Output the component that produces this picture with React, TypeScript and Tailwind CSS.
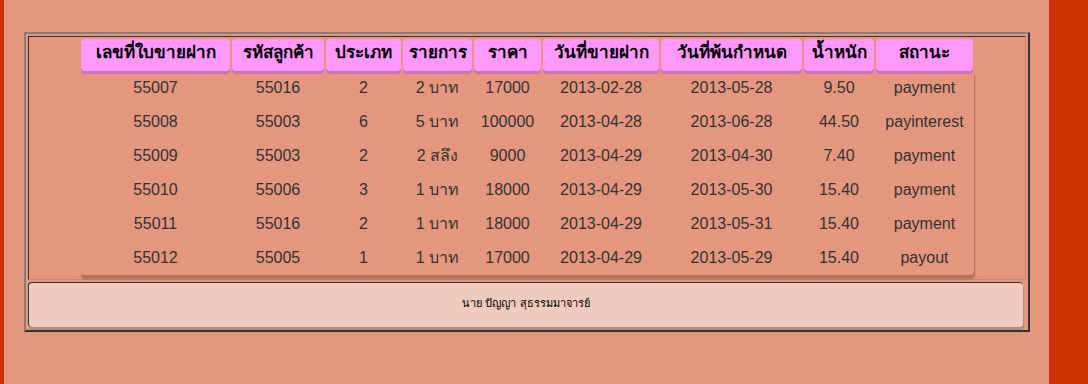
import React from "react";

const columns = [
  { label: "เลขที่ใบขายฝาก", width: "w-[151px]" },
  { label: "รหัสลูกค้า", width: "w-[94px]" },
  { label: "ประเภท", width: "w-[77px]" },
  { label: "รายการ", width: "w-[71px]" },
  { label: "ราคา", width: "w-[69px]" },
  { label: "วันที่ขายฝาก", width: "w-[118px]" },
  { label: "วันที่พ้นกำหนด", width: "w-[143px]" },
  { label: "น้ำหนัก", width: "w-[72px]" },
  { label: "สถานะ", width: "w-[99px]" },
];

const rows = [
  ["55007", "55016", "2", "2 บาท", "17000", "2013-02-28", "2013-05-28", "9.50", "payment"],
  ["55008", "55003", "6", "5 บาท", "100000", "2013-04-28", "2013-06-28", "44.50", "payinterest"],
  ["55009", "55003", "2", "2 สลึง", "9000", "2013-04-29", "2013-04-30", "7.40", "payment"],
  ["55010", "55006", "3", "1 บาท", "18000", "2013-04-29", "2013-05-30", "15.40", "payment"],
  ["55011", "55016", "2", "1 บาท", "18000", "2013-04-29", "2013-05-31", "15.40", "payment"],
  ["55012", "55005", "1", "1 บาท", "17000", "2013-04-29", "2013-05-29", "15.40", "payout"],
];

export default function App() {
  return (
    <div
      className="flex h-[384px] w-[1088px] bg-[#e4977e]"
      style={{ fontFamily: '"Liberation Sans", Tahoma, "Noto Sans", sans-serif' }}
    >
      <div className="w-[4px] bg-[#cc3300]" />
      <div className="flex-1 pl-[20px] pt-[32px]">
        {/* outer table with outset border */}
        <div className="flex w-[1006px] flex-col gap-[2px] border-2 border-t-[#808080] border-l-[#808080] border-r-[#333333] border-b-[#333333] p-[2px] pb-[3px]">
          <div className="flex h-[244px] justify-center border border-t-[#333333] border-l-[#333333] border-r-[#c98a74] border-b-[#c98a74] pt-[2px]">
            <div className="flex flex-col">
              <div className="flex">
                {columns.map((c) => (
                  <div key={c.label} className={`${c.width} px-[1px]`}>
                    <div className="flex h-[32px] items-center justify-center rounded-[4px] bg-[#ff99ff] pb-[4px] text-[17px] font-semibold text-black shadow-[0_3px_0_#c474b8]">
                      {c.label}
                    </div>
                  </div>
                ))}
              </div>
              <div className="rounded-b-[4px] shadow-[1px_4px_2px_rgba(120,60,40,0.45)]">
                {rows.map((r, i) => (
                  <div key={i} className="flex h-[34px] items-center">
                    {r.map((v, j) => (
                      <div
                        key={j}
                        className={`${columns[j].width} text-center text-[16px] text-[#333333]`}
                      >
                        {v}
                      </div>
                    ))}
                  </div>
                ))}
              </div>
            </div>
          </div>
          <div className="mr-[3px] flex h-[45px] items-center justify-center rounded-[4px] border border-[#333333] border-b-0 border-r-0 bg-[#f0cbbd] pb-[3px] text-[11px] text-black shadow-[1px_3px_0_#b38b7e]">
            นาย ปัญญา สุธรรมมาจารย์
          </div>
        </div>
      </div>
      <div className="w-[39px] bg-[#cc3300]" />
    </div>
  );
}
